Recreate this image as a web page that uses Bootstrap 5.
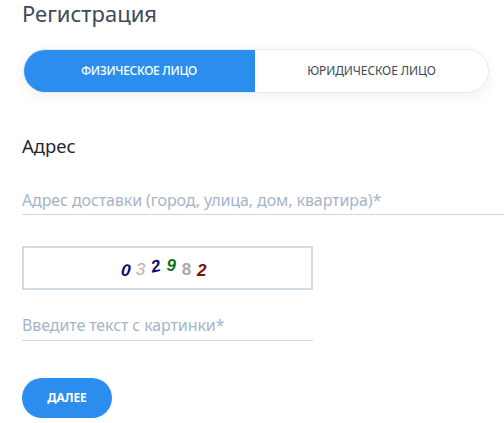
<!DOCTYPE html>
<html lang="ru">
<head>
<meta charset="utf-8">
<title>Регистрация</title>
<link rel="stylesheet" href="https://cdn.jsdelivr.net/npm/bootstrap@5.3.0/dist/css/bootstrap.min.css">
<style>
html,body{height:423px;overflow:hidden;background:#fff}
body{font-family:"Noto Sans","Open Sans",sans-serif;color:#25292e}
.page-wrap{padding:0 0 0 22px}
.reg-title{font-size:22px;line-height:26px;font-weight:400;color:#3d4a58;margin:0}
.kind-switch{width:466px;height:44px;margin-top:23px;border-radius:22px;background:#fff;border:1px solid #e6e9ed;box-shadow:0 4px 14px rgba(40,60,90,.07);overflow:hidden;margin-left:1px}
.kind-switch span{height:100%;font-size:12px;letter-spacing:-.3px}
.kind-on{width:232px;background:#2b8eee;color:#fff;font-weight:500;margin:-1px 0 -1px -1px;height:44px!important}
.kind-off{flex:1;color:#3d4a58}
.kind-switch .kind-off{letter-spacing:-.1px}
.addr-title{font-size:18.5px;line-height:24px;margin:41px 0 0;font-weight:400;color:#25292e}
.line-field{border:0;border-bottom:1px solid #cfd9e4;border-radius:0;padding:0;background:transparent;font-size:16px;letter-spacing:-.1px;color:#3d4a58;display:block;outline:0}
.line-field::placeholder{color:#a5b5c9;opacity:1}
.field-addr{width:482px;height:30px;margin-top:27px}
.captcha-box{width:291px;height:44px;margin-top:31px;border:2px solid #cfdbe6;gap:5.8px;padding-right:8px}
.captcha-box span{font-family:"Liberation Sans",sans-serif;font-size:17px;font-weight:700;font-style:italic;line-height:1}
.dg1{color:#0b0b70;transform:translateY(2px) rotate(6deg)}
.dg2{color:#b4b4b4;font-weight:400!important;transform:translateY(1px)}
.dg3{color:#0b0b70;transform:translateY(-2px) rotate(-12deg)}
.dg4{color:#14701c;transform:translateY(-3px)}
.dg5{color:#a8a8a8;font-style:normal!important;transform:translateY(1px)}
.dg6{color:#7c1010;transform:translateY(2px)}
.field-code{width:291px;height:31px;margin-top:20px}
.next-btn{width:90px;height:40px;margin-top:37px;border-radius:20px;background:#2b8eee;border:0;color:#fff;font-size:12px;font-weight:700;padding:0;letter-spacing:-.1px}
.next-btn:hover{background:#2b8eee;color:#fff}
</style>
</head>
<body>
<main class="page-wrap">
  <h1 class="reg-title">Регистрация</h1>
  <div class="kind-switch d-flex">
    <span class="kind-on d-flex align-items-center justify-content-center">ФИЗИЧЕСКОЕ ЛИЦО</span>
    <span class="kind-off d-flex align-items-center justify-content-center">ЮРИДИЧЕСКОЕ ЛИЦО</span>
  </div>
  <h2 class="addr-title">Адрес</h2>
  <input class="line-field field-addr" type="text" placeholder="Адрес доставки (город, улица, дом, квартира)*">
  <div class="captcha-box d-flex align-items-center justify-content-center">
    <span class="d-block dg1">0</span><span class="d-block dg2">3</span><span class="d-block dg3">2</span><span class="d-block dg4">9</span><span class="d-block dg5">8</span><span class="d-block dg6">2</span>
  </div>
  <input class="line-field field-code" type="text" placeholder="Введите текст с картинки*">
  <button class="btn next-btn d-block" type="button">ДАЛЕЕ</button>
</main>
<script src="https://cdn.jsdelivr.net/npm/bootstrap@5.3.0/dist/js/bootstrap.bundle.min.js"></script>
</body>
</html>
